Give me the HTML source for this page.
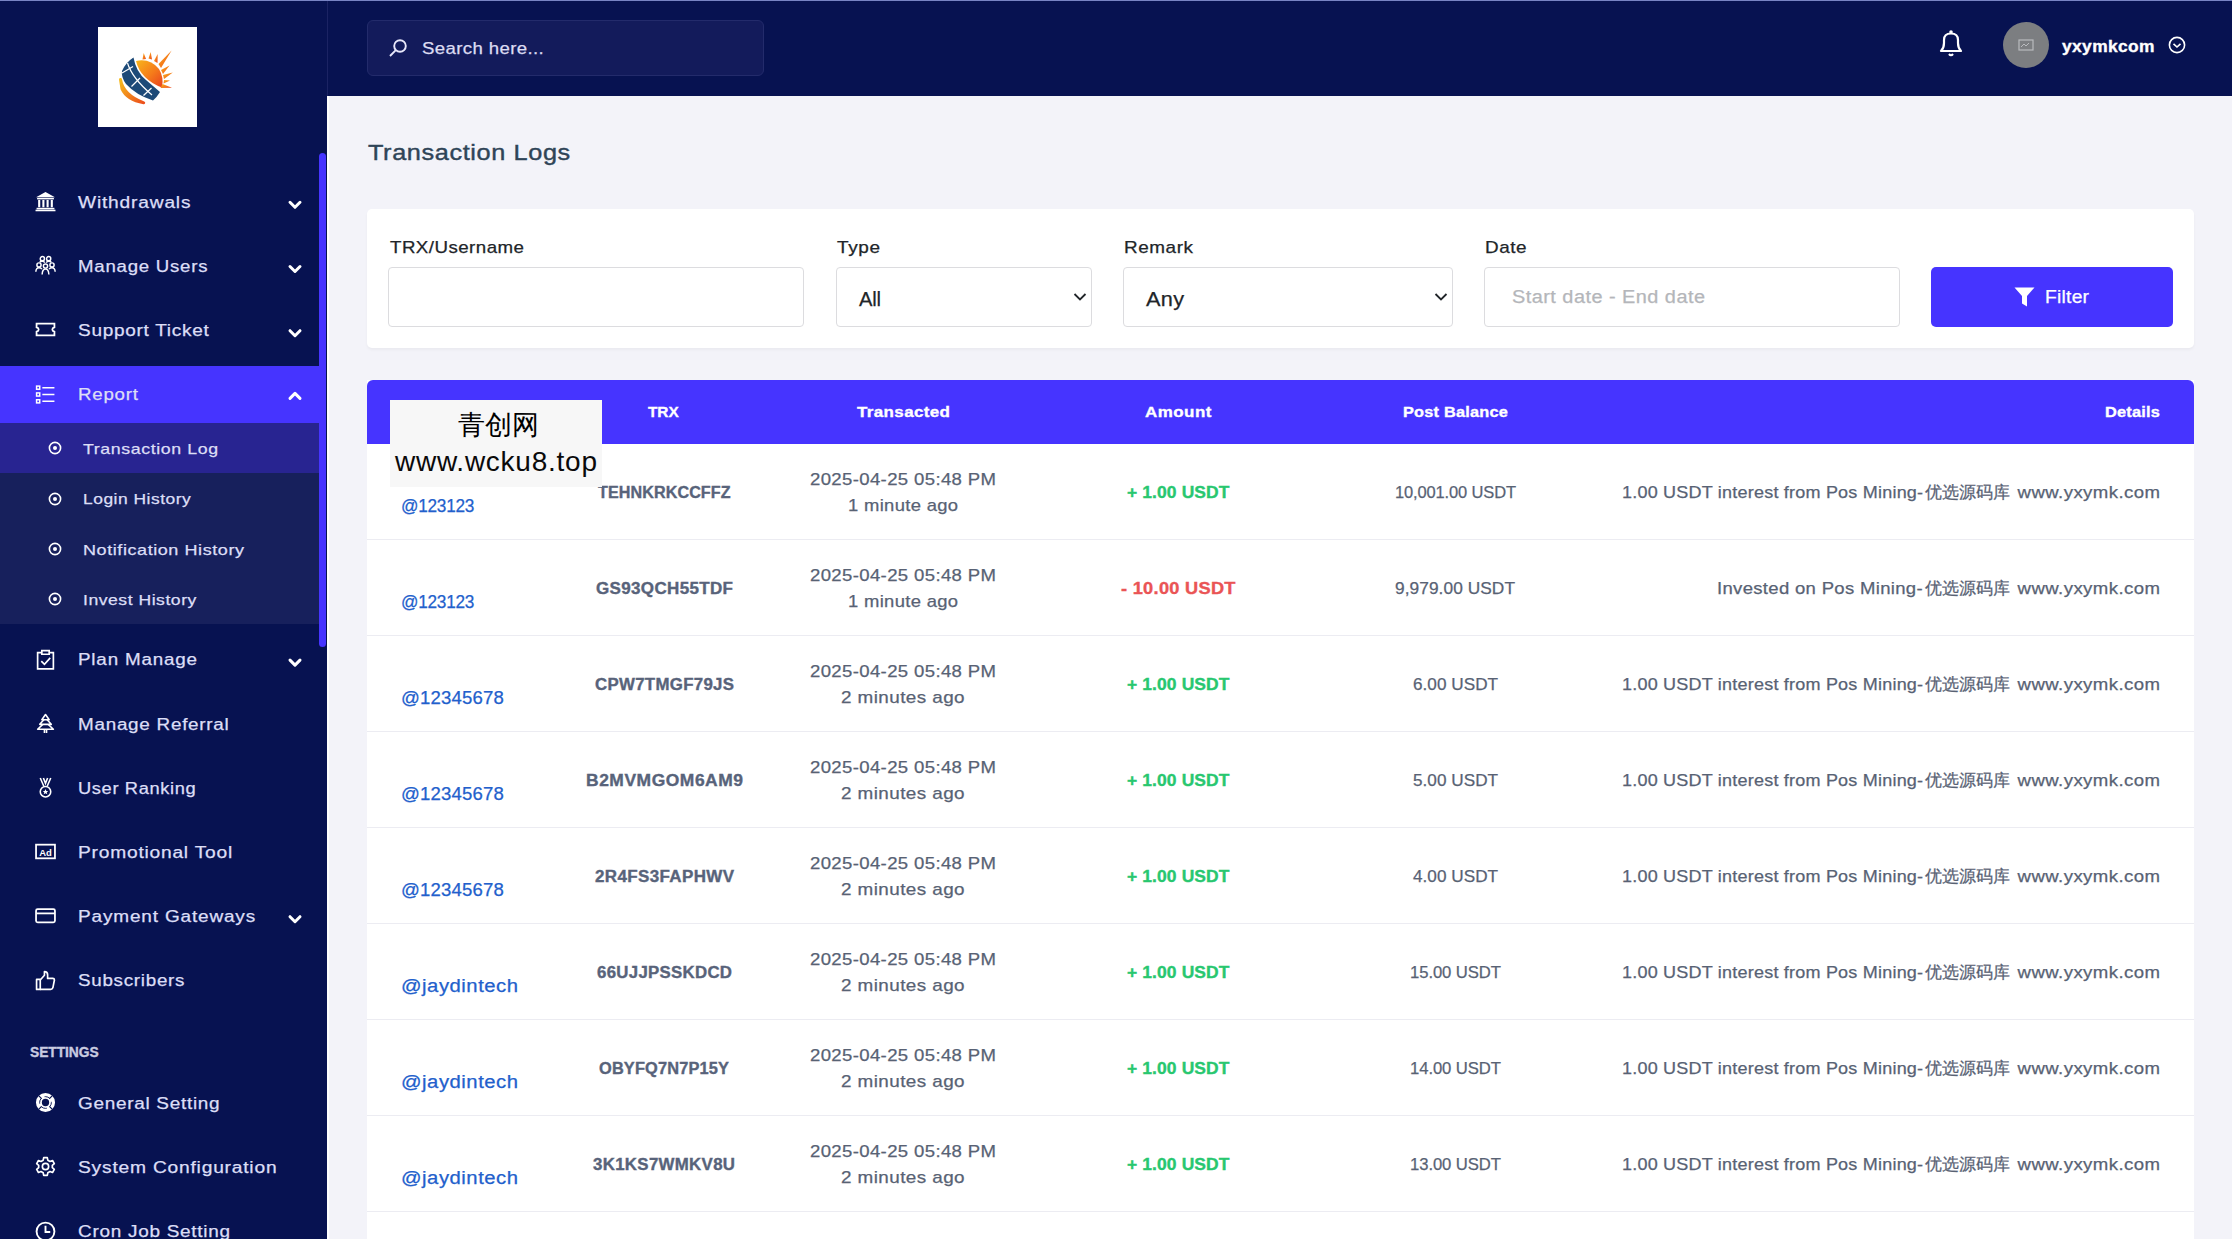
<!DOCTYPE html>
<html><head><meta charset="utf-8"><style>
html,body{margin:0;padding:0;}
body{width:2232px;height:1239px;overflow:hidden;position:relative;background:#f3f3f9;font-family:"Liberation Sans", sans-serif;}
svg{position:absolute;overflow:visible}
</style></head><body>
<div style="position:absolute;left:0px;top:0px;width:327px;height:1239px;background:#071251;"></div><div style="position:absolute;left:327px;top:0px;width:1px;height:96px;background:#1b2363;"></div><div style="position:absolute;left:327px;top:96px;width:2px;height:1143px;background:#ffffff;"></div><div style="position:absolute;left:0px;top:366px;width:319px;height:57px;background:#4634ff;"></div><div style="position:absolute;left:0px;top:423px;width:319px;height:201px;background:#17205c;"></div><div style="position:absolute;left:0px;top:423px;width:319px;height:50px;background:#282491;"></div><div style="position:absolute;left:319px;top:153px;width:7px;height:494px;background:#4634ff;border-radius:4px"></div><div style="position:absolute;left:0px;top:0px;width:2232px;height:1px;background:#7884c4;"></div><div style="position:absolute;left:98px;top:27px;width:99px;height:100px;background:#ffffff;"></div><svg style="left:110px;top:40px" width="75" height="72" viewBox="0 0 75 72">
<defs>
<linearGradient id="sg" x1="0" y1="0" x2="1" y2="1"><stop offset="0" stop-color="#f8b51b"/><stop offset="0.55" stop-color="#f57a1a"/><stop offset="1" stop-color="#e8401f"/></linearGradient>
<linearGradient id="cg" x1="0" y1="0" x2="1" y2="1"><stop offset="0" stop-color="#f5bb1d"/><stop offset="1" stop-color="#ec4f1c"/></linearGradient>
</defs>
<g fill="url(#sg)">
<path d="M26 21 Q40 18 49 29 Q54 37 52 47.5 Q42 44 35 37 Q28 30 26 21 Z"/>
<path d="M32.5 19.5 L33.7 13 L36 19 Z"/>
<path d="M38.5 18.5 L40.7 12 L42 19.5 Z"/>
<path d="M44 21 L47.7 14 L47.5 23 Z"/>
<path d="M48.5 24 L61.6 10.5 L51 28 Z"/>
<path d="M51 30 L59.5 25.6 L53 34 Z"/>
<path d="M53 35 L62.8 32.6 L54 39 Z"/>
<path d="M54 40 L60 40.5 L53.5 43.5 Z"/>
<path d="M52.5 44 L62 47.7 L50.5 48 Z"/>
</g>
<path d="M10.5 39.5 Q13 55 33.7 62.8 Q17 60 12 49 Z" fill="url(#cg)" stroke="url(#cg)" stroke-width="3" stroke-linejoin="round"/>
<path d="M23.5 17.5 Q26 32 36 40 Q43 46 50 52 Q47 57 43 60.5 Q26 55 16 44 Q11 37 12 31 Q16 22 23.5 17.5 Z" fill="#1d4a78"/>
<g stroke="#ffffff" stroke-width="1.2" fill="none">
<path d="M17.5 23 Q22 38 42 55"/>
<path d="M12 33 L23 26.5"/>
<path d="M21.5 46.5 L30 38"/>
<path d="M33.5 55.5 L41.5 48"/>
</g>
</svg><svg style="left:35.0px;top:191.0px" width="21" height="21" viewBox="0 0 20 20"><path d="M10 1 L19 6 L1 6 Z" fill="#fff"/><rect x="2" y="6.5" width="16" height="1.5" fill="#fff"/><g fill="#fff"><rect x="3" y="8.5" width="2" height="7"/><rect x="7" y="8.5" width="2" height="7"/><rect x="11" y="8.5" width="2" height="7"/><rect x="15" y="8.5" width="2" height="7"/></g><rect x="1.5" y="16" width="17" height="1.5" fill="#fff"/><rect x="0.5" y="17.8" width="19" height="1.5" fill="#fff"/></svg><svg style="left:0;top:0" width="1" height="1"><path d="M290 202.3 L295 207.3 L300 202.3" stroke="#ffffff" stroke-width="3" fill="none" stroke-linecap="round" stroke-linejoin="round"/></svg><svg style="left:35.0px;top:255.2px" width="21" height="21" viewBox="0 0 20 20"><g stroke="#fff" stroke-width="1.4" fill="none"><circle cx="7" cy="3.5" r="2"/><circle cx="13" cy="3.5" r="2"/><circle cx="3.8" cy="9.5" r="2"/><circle cx="10" cy="10.5" r="2"/><circle cx="16.2" cy="9.5" r="2"/><path d="M0.8 16 Q1 12.2 3.8 12.2 Q5.8 12.2 6.6 13.5"/><path d="M19.2 16 Q19 12.2 16.2 12.2 Q14.2 12.2 13.4 13.5"/><path d="M6.8 18.5 Q7 13.3 10 13.3 Q13 13.3 13.2 18.5"/><path d="M4.5 7 Q5 6 7 6 Q8.5 6 9.3 7.3 M15.5 7 Q15 6 13 6 Q11.5 6 10.7 7.3"/></g></svg><svg style="left:0;top:0" width="1" height="1"><path d="M290 266.5 L295 271.5 L300 266.5" stroke="#ffffff" stroke-width="3" fill="none" stroke-linecap="round" stroke-linejoin="round"/></svg><svg style="left:35.0px;top:319.4px" width="21" height="21" viewBox="0 0 20 20"><path d="M1.5 4.5 H18.5 V8 Q16.5 8.5 16.5 10 Q16.5 11.5 18.5 12 V15.5 H1.5 V12 Q3.5 11.5 3.5 10 Q3.5 8.5 1.5 8 Z" stroke="#fff" stroke-width="1.7" fill="none"/></svg><svg style="left:0;top:0" width="1" height="1"><path d="M290 330.7 L295 335.7 L300 330.7" stroke="#ffffff" stroke-width="3" fill="none" stroke-linecap="round" stroke-linejoin="round"/></svg><svg style="left:35.0px;top:383.59999999999997px" width="21" height="21" viewBox="0 0 20 20"><g stroke="#fff" stroke-width="1.4" fill="none"><rect x="1.5" y="2" width="3" height="3"/><rect x="1.5" y="8.5" width="3" height="3"/><rect x="1.5" y="15" width="3" height="3"/><path d="M7 3.5 H18.5 M7 10 H18.5 M7 16.5 H18.5"/></g></svg><svg style="left:0;top:0" width="1" height="1"><path d="M290 398.4 L295 393.4 L300 398.4" stroke="#ffffff" stroke-width="3" fill="none" stroke-linecap="round" stroke-linejoin="round"/></svg><svg style="left:48px;top:441.4px" width="14" height="14" viewBox="0 0 14 14"><circle cx="7" cy="7" r="5.6" stroke="#fff" stroke-width="1.6" fill="none"/><circle cx="7" cy="7" r="2" fill="#fff"/></svg><svg style="left:48px;top:491.5px" width="14" height="14" viewBox="0 0 14 14"><circle cx="7" cy="7" r="5.6" stroke="#fff" stroke-width="1.6" fill="none"/><circle cx="7" cy="7" r="2" fill="#fff"/></svg><svg style="left:48px;top:541.9px" width="14" height="14" viewBox="0 0 14 14"><circle cx="7" cy="7" r="5.6" stroke="#fff" stroke-width="1.6" fill="none"/><circle cx="7" cy="7" r="2" fill="#fff"/></svg><svg style="left:48px;top:592.1px" width="14" height="14" viewBox="0 0 14 14"><circle cx="7" cy="7" r="5.6" stroke="#fff" stroke-width="1.6" fill="none"/><circle cx="7" cy="7" r="2" fill="#fff"/></svg><svg style="left:35.0px;top:648.8000000000001px" width="21" height="21" viewBox="0 0 20 20"><g stroke="#fff" stroke-width="1.6" fill="none"><path d="M6 3.5 H2.5 V19 H17.5 V3.5 H14"/><path d="M6.5 1.5 H13.5 V5 H6.5 Z"/><path d="M6 11.5 L9 14.5 L14.5 8.5"/></g></svg><svg style="left:0;top:0" width="1" height="1"><path d="M290 660.1 L295 665.1 L300 660.1" stroke="#ffffff" stroke-width="3" fill="none" stroke-linecap="round" stroke-linejoin="round"/></svg><svg style="left:35.0px;top:713.0px" width="21" height="21" viewBox="0 0 20 20"><g stroke="#fff" stroke-width="1.5" fill="#071251" stroke-linejoin="round"><path d="M9 15.5 V19 M11 15.5 V19" fill="none"/><path d="M10 8.5 L17.5 15.5 L2.5 15.5 Z"/><path d="M10 4.8 L15.5 10.8 L4.5 10.8 Z"/><path d="M10 1.5 L13.5 6.5 L6.5 6.5 Z"/></g></svg><svg style="left:35.0px;top:777.1px" width="21" height="21" viewBox="0 0 20 20"><g stroke="#fff" stroke-width="1.5" fill="none"><path d="M5 1 L8.5 9 M15 1 L11.5 9 M8 1 L10 6 L12 1"/><circle cx="10" cy="14" r="5"/></g><path d="M10 11.5 L10.8 13.3 L12.6 13.4 L11.2 14.6 L11.7 16.4 L10 15.4 L8.3 16.4 L8.8 14.6 L7.4 13.4 L9.2 13.3 Z" fill="#fff"/></svg><svg style="left:35.0px;top:841.2px" width="21" height="21" viewBox="0 0 20 20"><rect x="1" y="3.5" width="18" height="13" stroke="#fff" stroke-width="1.7" fill="none"/><text x="10" y="14" font-size="9" font-weight="700" fill="#fff" text-anchor="middle" font-family="Liberation Sans">Ad</text></svg><svg style="left:35.0px;top:905.4000000000001px" width="21" height="21" viewBox="0 0 20 20"><g stroke="#fff" stroke-width="1.7" fill="none"><rect x="1" y="4" width="18" height="12.5" rx="1.5"/><path d="M1 8 H19"/></g></svg><svg style="left:0;top:0" width="1" height="1"><path d="M290 916.7 L295 921.7 L300 916.7" stroke="#ffffff" stroke-width="3" fill="none" stroke-linecap="round" stroke-linejoin="round"/></svg><svg style="left:35.0px;top:969.6px" width="21" height="21" viewBox="0 0 20 20"><g stroke="#fff" stroke-width="1.6" fill="none" stroke-linejoin="round"><rect x="1.5" y="9" width="3.5" height="9.5"/><path d="M5 9.5 L9 5 V1.5 Q12 1.5 12 4.5 V8 H17 Q18.5 8 18.5 9.5 L17 17 Q16.5 18.5 15 18.5 H5"/></g></svg><svg style="left:35.0px;top:1092.1000000000001px" width="21" height="21" viewBox="0 0 20 20"><circle cx="10" cy="10" r="6.3" stroke="#fff" stroke-width="5.6" fill="none"/><circle cx="10" cy="10" r="5.6" stroke="#071251" stroke-width="0.9" fill="none" stroke-dasharray="5.5 3.3" stroke-dashoffset="1.6"/><g stroke="#071251" stroke-width="1.2"><path d="M3.2 3.2 L6.3 6.3 M16.8 3.2 L13.7 6.3 M3.2 16.8 L6.3 13.7 M16.8 16.8 L13.7 13.7"/></g></svg><svg style="left:35.0px;top:1156.3px" width="21" height="21" viewBox="0 0 20 20"><g stroke="#fff" stroke-width="1.6" fill="none" stroke-linejoin="round"><path d="M8.3 1.5 H11.7 L12.2 4 L14.3 5.2 L16.7 4.3 L18.4 7.2 L16.5 8.9 V11.1 L18.4 12.8 L16.7 15.7 L14.3 14.8 L12.2 16 L11.7 18.5 H8.3 L7.8 16 L5.7 14.8 L3.3 15.7 L1.6 12.8 L3.5 11.1 V8.9 L1.6 7.2 L3.3 4.3 L5.7 5.2 L7.8 4 Z"/><circle cx="10" cy="10" r="3"/></g></svg><svg style="left:35.0px;top:1220.5px" width="21" height="21" viewBox="0 0 20 20"><g stroke="#fff" stroke-width="1.8" fill="none"><circle cx="10" cy="10" r="8.5"/><path d="M10 4.5 V10.5 H14.5"/></g></svg><div style="position:absolute;left:328px;top:0px;width:1904px;height:96px;background:#071251;"></div><div style="position:absolute;left:0px;top:0px;width:2232px;height:1px;background:#7884c4;"></div><div style="position:absolute;left:367px;top:20px;width:397px;height:56px;background:#131b5b;box-sizing:border-box;border:1px solid #232b6b;border-radius:6px"></div><svg style="left:388px;top:38px" width="20" height="20" viewBox="0 0 20 20"><g stroke="#e8e8fa" stroke-width="1.9" fill="none"><circle cx="12" cy="8" r="5.8"/><path d="M7.8 12.2 L2 18"/></g></svg><svg style="left:1938px;top:29px" width="26" height="28" viewBox="0 0 26 28"><g stroke="#fff" stroke-width="2.2" fill="none" stroke-linejoin="round"><path d="M3 22 Q6 19 6 14 V11 Q6 4.5 13 4.5 Q20 4.5 20 11 V14 Q20 19 23 22 Z"/><path d="M11 25 Q13 27.5 15 25"/></g><circle cx="13" cy="3" r="1.8" fill="#fff"/></svg><div style="position:absolute;left:2003px;top:22px;width:46px;height:46px;background:#7c7e81;border-radius:50%"></div><svg style="left:2018px;top:39px" width="16" height="12" viewBox="0 0 16 12"><rect x="1" y="1" width="14" height="10" stroke="#b9bbbe" stroke-width="1.2" fill="none"/><path d="M3 8 L6 5 L8 7 L11 4" stroke="#b9bbbe" stroke-width="1" fill="none"/></svg><svg style="left:2167px;top:35px" width="20" height="20" viewBox="0 0 20 20"><circle cx="10" cy="10" r="7.6" stroke="#fff" stroke-width="1.6" fill="none"/><path d="M6.5 8.8 L10 12 L13.5 8.8" stroke="#fff" stroke-width="1.6" fill="none"/></svg><div style="position:absolute;left:367px;top:209px;width:1827px;height:139px;background:#ffffff;border-radius:5px;box-shadow:0 2px 3px rgba(0,0,0,0.04)"></div><div style="position:absolute;left:388px;top:267px;width:416px;height:60px;background:#fff;box-sizing:border-box;border:1px solid #dcdcdf;border-radius:4px"></div><div style="position:absolute;left:836px;top:267px;width:256px;height:60px;background:#fff;box-sizing:border-box;border:1px solid #dcdcdf;border-radius:4px"></div><div style="position:absolute;left:1123px;top:267px;width:330px;height:60px;background:#fff;box-sizing:border-box;border:1px solid #dcdcdf;border-radius:4px"></div><div style="position:absolute;left:1484px;top:267px;width:416px;height:60px;background:#fff;box-sizing:border-box;border:1px solid #dcdcdf;border-radius:4px"></div><svg style="left:1073px;top:292px" width="14" height="10" viewBox="0 0 14 10"><path d="M1.5 2 L7 7.5 L12.5 2" stroke="#212529" stroke-width="1.8" fill="none"/></svg><svg style="left:1434px;top:292px" width="14" height="10" viewBox="0 0 14 10"><path d="M1.5 2 L7 7.5 L12.5 2" stroke="#212529" stroke-width="1.8" fill="none"/></svg><div style="position:absolute;left:1931px;top:267px;width:242px;height:60px;background:#4634ff;border-radius:5px"></div><svg style="left:2014px;top:287px" width="21" height="20" viewBox="0 0 21 20"><path d="M0.5 0.5 H20.5 L13 9 V19.5 L8 16.5 V9 Z" fill="#fff"/></svg><div style="position:absolute;left:367px;top:380px;width:1827px;height:859px;background:#ffffff;"></div><div style="position:absolute;left:367px;top:380px;width:1827px;height:64px;background:#4634ff;border-radius:6px 6px 0 0"></div><div style="position:absolute;left:367px;top:539px;width:1827px;height:1px;background:#ececf2;"></div><div style="position:absolute;left:367px;top:635px;width:1827px;height:1px;background:#ececf2;"></div><div style="position:absolute;left:367px;top:731px;width:1827px;height:1px;background:#ececf2;"></div><div style="position:absolute;left:367px;top:827px;width:1827px;height:1px;background:#ececf2;"></div><div style="position:absolute;left:367px;top:923px;width:1827px;height:1px;background:#ececf2;"></div><div style="position:absolute;left:367px;top:1019px;width:1827px;height:1px;background:#ececf2;"></div><div style="position:absolute;left:367px;top:1115px;width:1827px;height:1px;background:#ececf2;"></div><div style="position:absolute;left:367px;top:1211px;width:1827px;height:1px;background:#ececf2;"></div>
<div style="position:absolute;left:77.50px;top:194.59px;font-size:15.6px;line-height:15.6px;font-weight:400;color:#dcdef6;letter-spacing:0.674px;white-space:pre;transform-origin:0 0;transform:scaleX(1.2273);-webkit-text-stroke:0.25px currentColor;">Withdrawals</div><div style="position:absolute;left:77.50px;top:258.79px;font-size:15.6px;line-height:15.6px;font-weight:400;color:#dcdef6;letter-spacing:0.642px;white-space:pre;transform-origin:0 0;transform:scaleX(1.1939);-webkit-text-stroke:0.25px currentColor;">Manage Users</div><div style="position:absolute;left:77.50px;top:322.99px;font-size:15.6px;line-height:15.6px;font-weight:400;color:#dcdef6;letter-spacing:0.588px;white-space:pre;transform-origin:0 0;transform:scaleX(1.2178);-webkit-text-stroke:0.25px currentColor;">Support Ticket</div><div style="position:absolute;left:77.50px;top:387.19px;font-size:15.6px;line-height:15.6px;font-weight:400;color:#dcdef6;letter-spacing:0.661px;white-space:pre;transform-origin:0 0;transform:scaleX(1.1972);-webkit-text-stroke:0.25px currentColor;">Report</div><div style="position:absolute;left:82.80px;top:441.20px;font-size:15.0px;line-height:15.0px;font-weight:400;color:#dcdef6;letter-spacing:0.508px;white-space:pre;transform-origin:0 0;transform:scaleX(1.1837);-webkit-text-stroke:0.25px currentColor;">Transaction Log</div><div style="position:absolute;left:82.80px;top:491.30px;font-size:15.0px;line-height:15.0px;font-weight:400;color:#dcdef6;letter-spacing:0.436px;white-space:pre;transform-origin:0 0;transform:scaleX(1.1619);-webkit-text-stroke:0.25px currentColor;">Login History</div><div style="position:absolute;left:82.80px;top:541.70px;font-size:15.0px;line-height:15.0px;font-weight:400;color:#dcdef6;letter-spacing:0.473px;white-space:pre;transform-origin:0 0;transform:scaleX(1.2013);-webkit-text-stroke:0.25px currentColor;">Notification History</div><div style="position:absolute;left:82.80px;top:591.90px;font-size:15.0px;line-height:15.0px;font-weight:400;color:#dcdef6;letter-spacing:0.442px;white-space:pre;transform-origin:0 0;transform:scaleX(1.1729);-webkit-text-stroke:0.25px currentColor;">Invest History</div><div style="position:absolute;left:77.50px;top:652.39px;font-size:15.6px;line-height:15.6px;font-weight:400;color:#dcdef6;letter-spacing:0.674px;white-space:pre;transform-origin:0 0;transform:scaleX(1.2064);-webkit-text-stroke:0.25px currentColor;">Plan Manage</div><div style="position:absolute;left:77.50px;top:716.59px;font-size:15.6px;line-height:15.6px;font-weight:400;color:#dcdef6;letter-spacing:0.614px;white-space:pre;transform-origin:0 0;transform:scaleX(1.2088);-webkit-text-stroke:0.25px currentColor;">Manage Referral</div><div style="position:absolute;left:77.50px;top:780.69px;font-size:15.6px;line-height:15.6px;font-weight:400;color:#dcdef6;letter-spacing:0.541px;white-space:pre;transform-origin:0 0;transform:scaleX(1.1721);-webkit-text-stroke:0.25px currentColor;">User Ranking</div><div style="position:absolute;left:77.50px;top:844.79px;font-size:15.6px;line-height:15.6px;font-weight:400;color:#dcdef6;letter-spacing:0.622px;white-space:pre;transform-origin:0 0;transform:scaleX(1.2315);-webkit-text-stroke:0.25px currentColor;">Promotional Tool</div><div style="position:absolute;left:77.50px;top:908.99px;font-size:15.6px;line-height:15.6px;font-weight:400;color:#dcdef6;letter-spacing:0.690px;white-space:pre;transform-origin:0 0;transform:scaleX(1.2173);-webkit-text-stroke:0.25px currentColor;">Payment Gateways</div><div style="position:absolute;left:77.50px;top:973.19px;font-size:15.6px;line-height:15.6px;font-weight:400;color:#dcdef6;letter-spacing:0.601px;white-space:pre;transform-origin:0 0;transform:scaleX(1.2054);-webkit-text-stroke:0.25px currentColor;">Subscribers</div><div style="position:absolute;left:30.40px;top:1044.95px;font-size:14px;line-height:14px;font-weight:700;color:#c9cbe0;letter-spacing:-0.057px;white-space:pre;transform-origin:0 0;transform:scaleX(0.9868);-webkit-text-stroke:0.35px currentColor;">SETTINGS</div><div style="position:absolute;left:77.50px;top:1095.69px;font-size:15.6px;line-height:15.6px;font-weight:400;color:#dcdef6;letter-spacing:0.586px;white-space:pre;transform-origin:0 0;transform:scaleX(1.2147);-webkit-text-stroke:0.25px currentColor;">General Setting</div><div style="position:absolute;left:77.50px;top:1159.89px;font-size:15.6px;line-height:15.6px;font-weight:400;color:#dcdef6;letter-spacing:0.634px;white-space:pre;transform-origin:0 0;transform:scaleX(1.2325);-webkit-text-stroke:0.25px currentColor;">System Configuration</div><div style="position:absolute;left:77.50px;top:1224.09px;font-size:15.6px;line-height:15.6px;font-weight:400;color:#dcdef6;letter-spacing:0.590px;white-space:pre;transform-origin:0 0;transform:scaleX(1.2160);-webkit-text-stroke:0.25px currentColor;">Cron Job Setting</div><div style="position:absolute;left:421.90px;top:41.08px;font-size:16.8px;line-height:16.8px;font-weight:400;color:#dcdcf2;letter-spacing:0.341px;white-space:pre;transform-origin:0 0;transform:scaleX(1.1088);-webkit-text-stroke:0.25px currentColor;">Search here...</div><div style="position:absolute;left:2061.70px;top:38.08px;font-size:16.2px;line-height:16.2px;font-weight:700;color:#ffffff;letter-spacing:0.351px;white-space:pre;transform-origin:0 0;transform:scaleX(1.0736);-webkit-text-stroke:0.35px currentColor;">yxymkcom</div><div style="position:absolute;left:368.20px;top:142.45px;font-size:22.5px;line-height:22.5px;font-weight:400;color:#2f4457;letter-spacing:0.542px;white-space:pre;transform-origin:0 0;transform:scaleX(1.1240);-webkit-text-stroke:0.25px currentColor;-webkit-text-stroke:0.4px currentColor;">Transaction Logs</div><div style="position:absolute;left:389.70px;top:238.61px;font-size:17px;line-height:17px;font-weight:400;color:#212529;letter-spacing:0.418px;white-space:pre;transform-origin:0 0;transform:scaleX(1.1007);-webkit-text-stroke:0.25px currentColor;">TRX/Username</div><div style="position:absolute;left:836.50px;top:238.61px;font-size:17px;line-height:17px;font-weight:400;color:#212529;letter-spacing:0.550px;white-space:pre;transform-origin:0 0;transform:scaleX(1.1166);-webkit-text-stroke:0.25px currentColor;">Type</div><div style="position:absolute;left:1123.80px;top:238.61px;font-size:17px;line-height:17px;font-weight:400;color:#212529;letter-spacing:0.512px;white-space:pre;transform-origin:0 0;transform:scaleX(1.1116);-webkit-text-stroke:0.25px currentColor;">Remark</div><div style="position:absolute;left:1484.60px;top:238.61px;font-size:17px;line-height:17px;font-weight:400;color:#212529;letter-spacing:0.511px;white-space:pre;transform-origin:0 0;transform:scaleX(1.1106);-webkit-text-stroke:0.25px currentColor;">Date</div><div style="position:absolute;left:858.80px;top:287.72px;font-size:21px;line-height:21px;font-weight:400;color:#212529;letter-spacing:-0.210px;white-space:pre;transform-origin:0 0;transform:scaleX(0.9597);-webkit-text-stroke:0.25px currentColor;">All</div><div style="position:absolute;left:1145.60px;top:287.72px;font-size:21px;line-height:21px;font-weight:400;color:#212529;letter-spacing:0.263px;white-space:pre;transform-origin:0 0;transform:scaleX(1.0351);-webkit-text-stroke:0.25px currentColor;">Any</div><div style="position:absolute;left:1511.80px;top:289.18px;font-size:17.5px;line-height:17.5px;font-weight:400;color:#b4b6ba;letter-spacing:0.416px;white-space:pre;transform-origin:0 0;transform:scaleX(1.1365);-webkit-text-stroke:0.25px currentColor;">Start date - End date</div><div style="position:absolute;left:2044.70px;top:288.26px;font-size:18px;line-height:18px;font-weight:400;color:#ffffff;letter-spacing:0.224px;white-space:pre;transform-origin:0 0;transform:scaleX(1.0700);-webkit-text-stroke:0.25px currentColor;">Filter</div><div style="position:absolute;left:648.25px;top:404.08px;font-size:15.5px;line-height:15.5px;font-weight:700;color:#fff;letter-spacing:-0.045px;white-space:pre;transform-origin:0 0;transform:scaleX(0.9932);-webkit-text-stroke:0.35px currentColor;">TRX</div><div style="position:absolute;left:856.90px;top:404.08px;font-size:15.5px;line-height:15.5px;font-weight:700;color:#fff;letter-spacing:0.339px;white-space:pre;transform-origin:0 0;transform:scaleX(1.0953);-webkit-text-stroke:0.35px currentColor;">Transacted</div><div style="position:absolute;left:1144.60px;top:404.08px;font-size:15.5px;line-height:15.5px;font-weight:700;color:#fff;letter-spacing:0.431px;white-space:pre;transform-origin:0 0;transform:scaleX(1.0939);-webkit-text-stroke:0.35px currentColor;">Amount</div><div style="position:absolute;left:1403.20px;top:404.08px;font-size:15.5px;line-height:15.5px;font-weight:700;color:#fff;letter-spacing:0.193px;white-space:pre;transform-origin:0 0;transform:scaleX(1.0535);-webkit-text-stroke:0.35px currentColor;">Post Balance</div><div style="position:absolute;left:2105.00px;top:404.08px;font-size:15.5px;line-height:15.5px;font-weight:700;color:#fff;letter-spacing:0.197px;white-space:pre;transform-origin:0 0;transform:scaleX(1.0572);-webkit-text-stroke:0.35px currentColor;">Details</div><div style="position:absolute;left:401.00px;top:404.08px;font-size:15.5px;line-height:15.5px;font-weight:700;color:#fff;letter-spacing:0.149px;white-space:pre;transform-origin:0 0;transform:scaleX(1.0311);-webkit-text-stroke:0.35px currentColor;">User</div><div style="position:absolute;left:401.20px;top:496.76px;font-size:18px;line-height:18px;font-weight:400;color:#2260cc;letter-spacing:-0.259px;white-space:pre;transform-origin:0 0;transform:scaleX(0.9558);-webkit-text-stroke:0.25px currentColor;">@123123</div><div style="position:absolute;left:597.90px;top:484.72px;font-size:15.8px;line-height:15.8px;font-weight:700;color:#58637a;letter-spacing:0.096px;white-space:pre;transform-origin:0 0;transform:scaleX(1.0195);-webkit-text-stroke:0.35px currentColor;">TEHNKRKCCFFZ</div><div style="position:absolute;left:809.80px;top:471.21px;font-size:17px;line-height:17px;font-weight:400;color:#586274;letter-spacing:0.329px;white-space:pre;transform-origin:0 0;transform:scaleX(1.0917);-webkit-text-stroke:0.25px currentColor;">2025-04-25 05:48 PM</div><div style="position:absolute;left:847.80px;top:496.81px;font-size:17px;line-height:17px;font-weight:400;color:#586274;letter-spacing:0.295px;white-space:pre;transform-origin:0 0;transform:scaleX(1.0833);-webkit-text-stroke:0.25px currentColor;">1 minute ago</div><div style="position:absolute;left:1126.65px;top:484.01px;font-size:17px;line-height:17px;font-weight:700;color:#28c76f;letter-spacing:0.110px;white-space:pre;transform-origin:0 0;transform:scaleX(1.0266);-webkit-text-stroke:0.35px currentColor;">+ 1.00 USDT</div><div style="position:absolute;left:1394.80px;top:483.91px;font-size:17px;line-height:17px;font-weight:400;color:#586274;letter-spacing:-0.134px;white-space:pre;transform-origin:0 0;transform:scaleX(0.9688);-webkit-text-stroke:0.25px currentColor;">10,001.00 USDT</div><div style="position:absolute;left:2012.00px;top:483.91px;font-size:17px;line-height:17px;font-weight:400;color:#586274;letter-spacing:0.372px;white-space:pre;transform-origin:0 0;transform:scaleX(1.0948);-webkit-text-stroke:0.25px currentColor;"> www.yxymk.com</div><div style="position:absolute;left:1925.20px;top:483.91px;font-size:17px;line-height:17px;font-weight:400;color:#586274;letter-spacing:0.000px;white-space:pre;transform-origin:0 0;transform:scaleX(1.0000);-webkit-text-stroke:0.25px currentColor;">优选源码库</div><div style="position:absolute;left:1621.70px;top:483.91px;font-size:17px;line-height:17px;font-weight:400;color:#586274;letter-spacing:0.197px;white-space:pre;transform-origin:0 0;transform:scaleX(1.0596);-webkit-text-stroke:0.25px currentColor;">1.00 USDT interest from Pos Mining-</div><div style="position:absolute;left:401.20px;top:592.76px;font-size:18px;line-height:18px;font-weight:400;color:#2260cc;letter-spacing:-0.259px;white-space:pre;transform-origin:0 0;transform:scaleX(0.9558);-webkit-text-stroke:0.25px currentColor;">@123123</div><div style="position:absolute;left:595.70px;top:580.72px;font-size:15.8px;line-height:15.8px;font-weight:700;color:#58637a;letter-spacing:0.335px;white-space:pre;transform-origin:0 0;transform:scaleX(1.0748);-webkit-text-stroke:0.35px currentColor;">GS93QCH55TDF</div><div style="position:absolute;left:809.80px;top:567.21px;font-size:17px;line-height:17px;font-weight:400;color:#586274;letter-spacing:0.329px;white-space:pre;transform-origin:0 0;transform:scaleX(1.0917);-webkit-text-stroke:0.25px currentColor;">2025-04-25 05:48 PM</div><div style="position:absolute;left:847.80px;top:592.81px;font-size:17px;line-height:17px;font-weight:400;color:#586274;letter-spacing:0.295px;white-space:pre;transform-origin:0 0;transform:scaleX(1.0833);-webkit-text-stroke:0.25px currentColor;">1 minute ago</div><div style="position:absolute;left:1120.65px;top:580.01px;font-size:17px;line-height:17px;font-weight:700;color:#ea5455;letter-spacing:0.269px;white-space:pre;transform-origin:0 0;transform:scaleX(1.0711);-webkit-text-stroke:0.35px currentColor;">- 10.00 USDT</div><div style="position:absolute;left:1395.30px;top:579.91px;font-size:17px;line-height:17px;font-weight:400;color:#586274;letter-spacing:0.069px;white-space:pre;transform-origin:0 0;transform:scaleX(1.0168);-webkit-text-stroke:0.25px currentColor;">9,979.00 USDT</div><div style="position:absolute;left:2012.00px;top:579.91px;font-size:17px;line-height:17px;font-weight:400;color:#586274;letter-spacing:0.372px;white-space:pre;transform-origin:0 0;transform:scaleX(1.0948);-webkit-text-stroke:0.25px currentColor;"> www.yxymk.com</div><div style="position:absolute;left:1925.20px;top:579.91px;font-size:17px;line-height:17px;font-weight:400;color:#586274;letter-spacing:0.000px;white-space:pre;transform-origin:0 0;transform:scaleX(1.0000);-webkit-text-stroke:0.25px currentColor;">优选源码库</div><div style="position:absolute;left:1717.20px;top:579.91px;font-size:17px;line-height:17px;font-weight:400;color:#586274;letter-spacing:0.291px;white-space:pre;transform-origin:0 0;transform:scaleX(1.0891);-webkit-text-stroke:0.25px currentColor;">Invested on Pos Mining-</div><div style="position:absolute;left:401.20px;top:688.76px;font-size:18px;line-height:18px;font-weight:400;color:#2260cc;letter-spacing:0.161px;white-space:pre;transform-origin:0 0;transform:scaleX(1.0316);-webkit-text-stroke:0.25px currentColor;">@12345678</div><div style="position:absolute;left:594.70px;top:676.72px;font-size:15.8px;line-height:15.8px;font-weight:700;color:#58637a;letter-spacing:0.300px;white-space:pre;transform-origin:0 0;transform:scaleX(1.0644);-webkit-text-stroke:0.35px currentColor;">CPW7TMGF79JS</div><div style="position:absolute;left:809.80px;top:663.21px;font-size:17px;line-height:17px;font-weight:400;color:#586274;letter-spacing:0.329px;white-space:pre;transform-origin:0 0;transform:scaleX(1.0917);-webkit-text-stroke:0.25px currentColor;">2025-04-25 05:48 PM</div><div style="position:absolute;left:841.00px;top:688.81px;font-size:17px;line-height:17px;font-weight:400;color:#586274;letter-spacing:0.378px;white-space:pre;transform-origin:0 0;transform:scaleX(1.1101);-webkit-text-stroke:0.25px currentColor;">2 minutes ago</div><div style="position:absolute;left:1126.65px;top:676.01px;font-size:17px;line-height:17px;font-weight:700;color:#28c76f;letter-spacing:0.110px;white-space:pre;transform-origin:0 0;transform:scaleX(1.0266);-webkit-text-stroke:0.35px currentColor;">+ 1.00 USDT</div><div style="position:absolute;left:1412.80px;top:675.91px;font-size:17px;line-height:17px;font-weight:400;color:#586274;letter-spacing:0.034px;white-space:pre;transform-origin:0 0;transform:scaleX(1.0075);-webkit-text-stroke:0.25px currentColor;">6.00 USDT</div><div style="position:absolute;left:2012.00px;top:675.91px;font-size:17px;line-height:17px;font-weight:400;color:#586274;letter-spacing:0.372px;white-space:pre;transform-origin:0 0;transform:scaleX(1.0948);-webkit-text-stroke:0.25px currentColor;"> www.yxymk.com</div><div style="position:absolute;left:1925.20px;top:675.91px;font-size:17px;line-height:17px;font-weight:400;color:#586274;letter-spacing:0.000px;white-space:pre;transform-origin:0 0;transform:scaleX(1.0000);-webkit-text-stroke:0.25px currentColor;">优选源码库</div><div style="position:absolute;left:1621.70px;top:675.91px;font-size:17px;line-height:17px;font-weight:400;color:#586274;letter-spacing:0.197px;white-space:pre;transform-origin:0 0;transform:scaleX(1.0596);-webkit-text-stroke:0.25px currentColor;">1.00 USDT interest from Pos Mining-</div><div style="position:absolute;left:401.20px;top:784.76px;font-size:18px;line-height:18px;font-weight:400;color:#2260cc;letter-spacing:0.161px;white-space:pre;transform-origin:0 0;transform:scaleX(1.0316);-webkit-text-stroke:0.25px currentColor;">@12345678</div><div style="position:absolute;left:585.70px;top:772.72px;font-size:15.8px;line-height:15.8px;font-weight:700;color:#58637a;letter-spacing:0.497px;white-space:pre;transform-origin:0 0;transform:scaleX(1.1026);-webkit-text-stroke:0.35px currentColor;">B2MVMGOM6AM9</div><div style="position:absolute;left:809.80px;top:759.21px;font-size:17px;line-height:17px;font-weight:400;color:#586274;letter-spacing:0.329px;white-space:pre;transform-origin:0 0;transform:scaleX(1.0917);-webkit-text-stroke:0.25px currentColor;">2025-04-25 05:48 PM</div><div style="position:absolute;left:841.00px;top:784.81px;font-size:17px;line-height:17px;font-weight:400;color:#586274;letter-spacing:0.378px;white-space:pre;transform-origin:0 0;transform:scaleX(1.1101);-webkit-text-stroke:0.25px currentColor;">2 minutes ago</div><div style="position:absolute;left:1126.65px;top:772.01px;font-size:17px;line-height:17px;font-weight:700;color:#28c76f;letter-spacing:0.110px;white-space:pre;transform-origin:0 0;transform:scaleX(1.0266);-webkit-text-stroke:0.35px currentColor;">+ 1.00 USDT</div><div style="position:absolute;left:1412.80px;top:771.91px;font-size:17px;line-height:17px;font-weight:400;color:#586274;letter-spacing:0.034px;white-space:pre;transform-origin:0 0;transform:scaleX(1.0075);-webkit-text-stroke:0.25px currentColor;">5.00 USDT</div><div style="position:absolute;left:2012.00px;top:771.91px;font-size:17px;line-height:17px;font-weight:400;color:#586274;letter-spacing:0.372px;white-space:pre;transform-origin:0 0;transform:scaleX(1.0948);-webkit-text-stroke:0.25px currentColor;"> www.yxymk.com</div><div style="position:absolute;left:1925.20px;top:771.91px;font-size:17px;line-height:17px;font-weight:400;color:#586274;letter-spacing:0.000px;white-space:pre;transform-origin:0 0;transform:scaleX(1.0000);-webkit-text-stroke:0.25px currentColor;">优选源码库</div><div style="position:absolute;left:1621.70px;top:771.91px;font-size:17px;line-height:17px;font-weight:400;color:#586274;letter-spacing:0.197px;white-space:pre;transform-origin:0 0;transform:scaleX(1.0596);-webkit-text-stroke:0.25px currentColor;">1.00 USDT interest from Pos Mining-</div><div style="position:absolute;left:401.20px;top:880.76px;font-size:18px;line-height:18px;font-weight:400;color:#2260cc;letter-spacing:0.161px;white-space:pre;transform-origin:0 0;transform:scaleX(1.0316);-webkit-text-stroke:0.25px currentColor;">@12345678</div><div style="position:absolute;left:594.70px;top:868.72px;font-size:15.8px;line-height:15.8px;font-weight:700;color:#58637a;letter-spacing:0.342px;white-space:pre;transform-origin:0 0;transform:scaleX(1.0751);-webkit-text-stroke:0.35px currentColor;">2R4FS3FAPHWV</div><div style="position:absolute;left:809.80px;top:855.21px;font-size:17px;line-height:17px;font-weight:400;color:#586274;letter-spacing:0.329px;white-space:pre;transform-origin:0 0;transform:scaleX(1.0917);-webkit-text-stroke:0.25px currentColor;">2025-04-25 05:48 PM</div><div style="position:absolute;left:841.00px;top:880.81px;font-size:17px;line-height:17px;font-weight:400;color:#586274;letter-spacing:0.378px;white-space:pre;transform-origin:0 0;transform:scaleX(1.1101);-webkit-text-stroke:0.25px currentColor;">2 minutes ago</div><div style="position:absolute;left:1126.65px;top:868.01px;font-size:17px;line-height:17px;font-weight:700;color:#28c76f;letter-spacing:0.110px;white-space:pre;transform-origin:0 0;transform:scaleX(1.0266);-webkit-text-stroke:0.35px currentColor;">+ 1.00 USDT</div><div style="position:absolute;left:1412.80px;top:867.91px;font-size:17px;line-height:17px;font-weight:400;color:#586274;letter-spacing:0.034px;white-space:pre;transform-origin:0 0;transform:scaleX(1.0075);-webkit-text-stroke:0.25px currentColor;">4.00 USDT</div><div style="position:absolute;left:2012.00px;top:867.91px;font-size:17px;line-height:17px;font-weight:400;color:#586274;letter-spacing:0.372px;white-space:pre;transform-origin:0 0;transform:scaleX(1.0948);-webkit-text-stroke:0.25px currentColor;"> www.yxymk.com</div><div style="position:absolute;left:1925.20px;top:867.91px;font-size:17px;line-height:17px;font-weight:400;color:#586274;letter-spacing:0.000px;white-space:pre;transform-origin:0 0;transform:scaleX(1.0000);-webkit-text-stroke:0.25px currentColor;">优选源码库</div><div style="position:absolute;left:1621.70px;top:867.91px;font-size:17px;line-height:17px;font-weight:400;color:#586274;letter-spacing:0.197px;white-space:pre;transform-origin:0 0;transform:scaleX(1.0596);-webkit-text-stroke:0.25px currentColor;">1.00 USDT interest from Pos Mining-</div><div style="position:absolute;left:401.20px;top:976.76px;font-size:18px;line-height:18px;font-weight:400;color:#2260cc;letter-spacing:0.471px;white-space:pre;transform-origin:0 0;transform:scaleX(1.1245);-webkit-text-stroke:0.25px currentColor;">@jaydintech</div><div style="position:absolute;left:596.70px;top:964.72px;font-size:15.8px;line-height:15.8px;font-weight:700;color:#58637a;letter-spacing:0.287px;white-space:pre;transform-origin:0 0;transform:scaleX(1.0633);-webkit-text-stroke:0.35px currentColor;">66UJJPSSKDCD</div><div style="position:absolute;left:809.80px;top:951.21px;font-size:17px;line-height:17px;font-weight:400;color:#586274;letter-spacing:0.329px;white-space:pre;transform-origin:0 0;transform:scaleX(1.0917);-webkit-text-stroke:0.25px currentColor;">2025-04-25 05:48 PM</div><div style="position:absolute;left:841.00px;top:976.81px;font-size:17px;line-height:17px;font-weight:400;color:#586274;letter-spacing:0.378px;white-space:pre;transform-origin:0 0;transform:scaleX(1.1101);-webkit-text-stroke:0.25px currentColor;">2 minutes ago</div><div style="position:absolute;left:1126.65px;top:964.01px;font-size:17px;line-height:17px;font-weight:700;color:#28c76f;letter-spacing:0.110px;white-space:pre;transform-origin:0 0;transform:scaleX(1.0266);-webkit-text-stroke:0.35px currentColor;">+ 1.00 USDT</div><div style="position:absolute;left:1409.80px;top:963.91px;font-size:17px;line-height:17px;font-weight:400;color:#586274;letter-spacing:-0.087px;white-space:pre;transform-origin:0 0;transform:scaleX(0.9809);-webkit-text-stroke:0.25px currentColor;">15.00 USDT</div><div style="position:absolute;left:2012.00px;top:963.91px;font-size:17px;line-height:17px;font-weight:400;color:#586274;letter-spacing:0.372px;white-space:pre;transform-origin:0 0;transform:scaleX(1.0948);-webkit-text-stroke:0.25px currentColor;"> www.yxymk.com</div><div style="position:absolute;left:1925.20px;top:963.91px;font-size:17px;line-height:17px;font-weight:400;color:#586274;letter-spacing:0.000px;white-space:pre;transform-origin:0 0;transform:scaleX(1.0000);-webkit-text-stroke:0.25px currentColor;">优选源码库</div><div style="position:absolute;left:1621.70px;top:963.91px;font-size:17px;line-height:17px;font-weight:400;color:#586274;letter-spacing:0.197px;white-space:pre;transform-origin:0 0;transform:scaleX(1.0596);-webkit-text-stroke:0.25px currentColor;">1.00 USDT interest from Pos Mining-</div><div style="position:absolute;left:401.20px;top:1072.76px;font-size:18px;line-height:18px;font-weight:400;color:#2260cc;letter-spacing:0.471px;white-space:pre;transform-origin:0 0;transform:scaleX(1.1245);-webkit-text-stroke:0.25px currentColor;">@jaydintech</div><div style="position:absolute;left:599.20px;top:1060.72px;font-size:15.8px;line-height:15.8px;font-weight:700;color:#58637a;letter-spacing:0.163px;white-space:pre;transform-origin:0 0;transform:scaleX(1.0351);-webkit-text-stroke:0.35px currentColor;">OBYFQ7N7P15Y</div><div style="position:absolute;left:809.80px;top:1047.21px;font-size:17px;line-height:17px;font-weight:400;color:#586274;letter-spacing:0.329px;white-space:pre;transform-origin:0 0;transform:scaleX(1.0917);-webkit-text-stroke:0.25px currentColor;">2025-04-25 05:48 PM</div><div style="position:absolute;left:841.00px;top:1072.81px;font-size:17px;line-height:17px;font-weight:400;color:#586274;letter-spacing:0.378px;white-space:pre;transform-origin:0 0;transform:scaleX(1.1101);-webkit-text-stroke:0.25px currentColor;">2 minutes ago</div><div style="position:absolute;left:1126.65px;top:1060.01px;font-size:17px;line-height:17px;font-weight:700;color:#28c76f;letter-spacing:0.110px;white-space:pre;transform-origin:0 0;transform:scaleX(1.0266);-webkit-text-stroke:0.35px currentColor;">+ 1.00 USDT</div><div style="position:absolute;left:1409.80px;top:1059.91px;font-size:17px;line-height:17px;font-weight:400;color:#586274;letter-spacing:-0.087px;white-space:pre;transform-origin:0 0;transform:scaleX(0.9809);-webkit-text-stroke:0.25px currentColor;">14.00 USDT</div><div style="position:absolute;left:2012.00px;top:1059.91px;font-size:17px;line-height:17px;font-weight:400;color:#586274;letter-spacing:0.372px;white-space:pre;transform-origin:0 0;transform:scaleX(1.0948);-webkit-text-stroke:0.25px currentColor;"> www.yxymk.com</div><div style="position:absolute;left:1925.20px;top:1059.91px;font-size:17px;line-height:17px;font-weight:400;color:#586274;letter-spacing:0.000px;white-space:pre;transform-origin:0 0;transform:scaleX(1.0000);-webkit-text-stroke:0.25px currentColor;">优选源码库</div><div style="position:absolute;left:1621.70px;top:1059.91px;font-size:17px;line-height:17px;font-weight:400;color:#586274;letter-spacing:0.197px;white-space:pre;transform-origin:0 0;transform:scaleX(1.0596);-webkit-text-stroke:0.25px currentColor;">1.00 USDT interest from Pos Mining-</div><div style="position:absolute;left:401.20px;top:1168.76px;font-size:18px;line-height:18px;font-weight:400;color:#2260cc;letter-spacing:0.471px;white-space:pre;transform-origin:0 0;transform:scaleX(1.1245);-webkit-text-stroke:0.25px currentColor;">@jaydintech</div><div style="position:absolute;left:593.20px;top:1156.72px;font-size:15.8px;line-height:15.8px;font-weight:700;color:#58637a;letter-spacing:0.309px;white-space:pre;transform-origin:0 0;transform:scaleX(1.0651);-webkit-text-stroke:0.35px currentColor;">3K1KS7WMKV8U</div><div style="position:absolute;left:809.80px;top:1143.21px;font-size:17px;line-height:17px;font-weight:400;color:#586274;letter-spacing:0.329px;white-space:pre;transform-origin:0 0;transform:scaleX(1.0917);-webkit-text-stroke:0.25px currentColor;">2025-04-25 05:48 PM</div><div style="position:absolute;left:841.00px;top:1168.81px;font-size:17px;line-height:17px;font-weight:400;color:#586274;letter-spacing:0.378px;white-space:pre;transform-origin:0 0;transform:scaleX(1.1101);-webkit-text-stroke:0.25px currentColor;">2 minutes ago</div><div style="position:absolute;left:1126.65px;top:1156.01px;font-size:17px;line-height:17px;font-weight:700;color:#28c76f;letter-spacing:0.110px;white-space:pre;transform-origin:0 0;transform:scaleX(1.0266);-webkit-text-stroke:0.35px currentColor;">+ 1.00 USDT</div><div style="position:absolute;left:1409.80px;top:1155.91px;font-size:17px;line-height:17px;font-weight:400;color:#586274;letter-spacing:-0.087px;white-space:pre;transform-origin:0 0;transform:scaleX(0.9809);-webkit-text-stroke:0.25px currentColor;">13.00 USDT</div><div style="position:absolute;left:2012.00px;top:1155.91px;font-size:17px;line-height:17px;font-weight:400;color:#586274;letter-spacing:0.372px;white-space:pre;transform-origin:0 0;transform:scaleX(1.0948);-webkit-text-stroke:0.25px currentColor;"> www.yxymk.com</div><div style="position:absolute;left:1925.20px;top:1155.91px;font-size:17px;line-height:17px;font-weight:400;color:#586274;letter-spacing:0.000px;white-space:pre;transform-origin:0 0;transform:scaleX(1.0000);-webkit-text-stroke:0.25px currentColor;">优选源码库</div><div style="position:absolute;left:1621.70px;top:1155.91px;font-size:17px;line-height:17px;font-weight:400;color:#586274;letter-spacing:0.197px;white-space:pre;transform-origin:0 0;transform:scaleX(1.0596);-webkit-text-stroke:0.25px currentColor;">1.00 USDT interest from Pos Mining-</div>
<div style="position:absolute;left:390px;top:400px;width:212px;height:87px;background:#f7f7f7"></div><div style="position:absolute;left:392px;top:407.5px;width:212px;text-align:center;font-size:27px;line-height:34px;color:#000">青创网</div><div style="position:absolute;left:395px;top:445px;font-size:28px;line-height:34px;color:#0a0a0a;letter-spacing:0.75px;white-space:pre">www.wcku8.top</div>
</body></html>
